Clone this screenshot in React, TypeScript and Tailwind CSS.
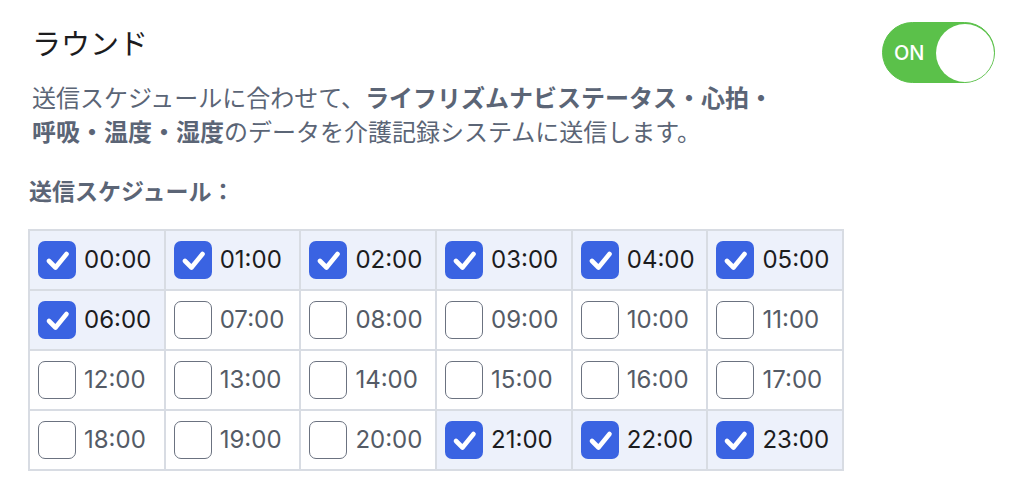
import { useState } from "react";

const initialChecked = [0, 1, 2, 3, 4, 5, 6, 21, 22, 23];

function pad(n: number) {
  return `${n.toString().padStart(2, "0")}:00`;
}

export default function App() {
  const [isOn, setIsOn] = useState(true);
  const [checked, setChecked] = useState<number[]>(initialChecked);

  const toggleHour = (hour: number) => {
    setChecked((prev) => (prev.includes(hour) ? prev.filter((h) => h !== hour) : [...prev, hour]));
  };

  const rows = [0, 1, 2, 3].map((r) => [0, 1, 2, 3, 4, 5].map((c) => r * 6 + c));

  return (
    <div className="min-h-screen bg-white pl-8 pr-[29px] pt-[22px] font-['Inter','Noto_Sans_CJK_JP',sans-serif] text-[#1c1c1e]">
      <div className="flex items-start justify-between">
        <h1 className="mt-[2px] text-[29px] leading-[36px] font-normal font-['Noto_Sans_CJK_JP',sans-serif]">
          ラウンド
        </h1>
        <button
          type="button"
          onClick={() => setIsOn((v) => !v)}
          className={`flex h-[61px] w-[113px] items-center rounded-full border-[1.5px] ${isOn ? "border-[#5bc14a] bg-[#5bc14a]" : "border-[#d1d5db] bg-[#e5e7eb]"}`}
        >
          {isOn ? (
            <>
              <span className="ml-[11px] text-[20px] font-medium text-white font-['Inter',sans-serif]">ON</span>
              <span className="ml-auto h-[58px] w-[58px] rounded-full bg-white" />
            </>
          ) : (
            <span className="h-[58px] w-[58px] rounded-full bg-white" />
          )}
        </button>
      </div>

      <p className="-mt-[3px] text-[24px] leading-[34px] text-[#5b6576] font-['Noto_Sans_CJK_JP',sans-serif]">
        送信スケジュールに合わせて、<span className="font-bold">ライフリズムナビステータス・心拍・</span>
        <br />
        <span className="font-bold">呼吸・温度・湿度</span>のデータを介護記録システムに送信します。
      </p>

      <p className="-ml-[3px] mt-[27px] text-[23px] leading-[30px] font-bold text-[#5b6576] font-['Noto_Sans_CJK_JP',sans-serif]">
        送信スケジュール：
      </p>

      <table className="-ml-[4px] mt-[24px] border-collapse">
        <tbody>
          {rows.map((row, ri) => (
            <tr key={ri}>
              {row.map((hour) => {
                const isChecked = checked.includes(hour);
                return (
                  <td
                    key={hour}
                    className={`h-[60px] w-[135.7px] border-2 border-[#d8dce3] p-0 ${isChecked ? "bg-[#edf1fb]" : "bg-white"}`}
                  >
                    <label className="flex cursor-pointer items-center gap-[8px] pl-[8px]">
                      <input
                        type="checkbox"
                        className="sr-only"
                        checked={isChecked}
                        onChange={() => toggleHour(hour)}
                      />
                      {isChecked ? (
                        <span className="h-[38px] w-[38px] rounded-[7px] bg-[#3a63e2]">
                          <svg width="38" height="38" viewBox="0 0 38 38" fill="none">
                            <path d="M11 20l6.5 6.5L28.5 13" stroke="white" strokeWidth="4.6" strokeLinecap="round" strokeLinejoin="round" />
                          </svg>
                        </span>
                      ) : (
                        <span className="h-[38px] w-[38px] rounded-[7px] border-[1.5px] border-[#6b7280] bg-white" />
                      )}
                      <span className={`text-[24px] leading-none ${isChecked ? "text-[#1c1c1e]" : "text-[#545b66]"}`}>
                        {pad(hour)}
                      </span>
                    </label>
                  </td>
                );
              })}
            </tr>
          ))}
        </tbody>
      </table>
    </div>
  );
}
